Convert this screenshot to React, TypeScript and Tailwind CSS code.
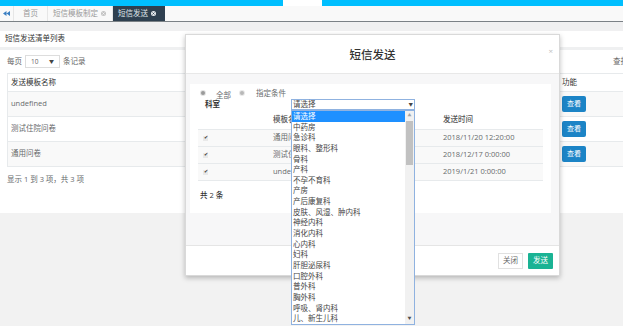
const depts = [
  "请选择",
  "中药房",
  "急诊科",
  "眼科、整形科",
  "骨科",
  "产科",
  "不孕不育科",
  "产房",
  "产后康复科",
  "皮肤、风湿、肿内科",
  "神经内科",
  "消化内科",
  "心内科",
  "妇科",
  "肝胆泌尿科",
  "口腔外科",
  "普外科",
  "胸外科",
  "呼吸、肾内科",
  "儿、新生儿科",
  "外科",
];

const pageRows = ["undefined", "测试住院问卷", "通用问卷"];

const sendRows = [
  { name: "通用问卷", time: "2018/11/20 12:20:00" },
  { name: "测试住院问卷", time: "2018/12/17 0:00:00" },
  { name: "undefined", time: "2019/1/21 0:00:00" },
];

const CloseCircle = ({ color, cross }: { color: string; cross: string }) => (
  <svg width="5" height="5" viewBox="0 0 10 10" className="ml-[3px]">
    <circle cx="5" cy="5" r="5" fill={color} />
    <path d="M3 3 L7 7 M7 3 L3 7" stroke={cross} strokeWidth="1.6" />
  </svg>
);

const TabBar = () => {
  return (
    <div className="flex h-[16px] items-stretch border-b border-[#7b8186] bg-[#f9f9f9] text-[7.5px] text-[#999]">
      <div className="flex w-[14px] items-center justify-center border-r border-[#e6e6e6]">
        <svg width="7" height="5" viewBox="0 0 14 10">
          <path d="M0 5 L7 0 L7 10 Z M7 5 L14 0 L14 10 Z" fill="#3a7fc2" />
        </svg>
      </div>
      <div className="flex w-[34px] items-center justify-center border-r border-[#e6e6e6]">首页</div>
      <div className="flex items-center border-r border-[#e6e6e6] pr-[6px] pl-[5px]">
        短信模板制定
        <CloseCircle color="#c4c4c4" cross="#f9f9f9" />
      </div>
      <div className="flex w-[52px] items-center bg-[#2f4050] pl-[5px] text-[#dfe4e8]">
        短信发送
        <CloseCircle color="#e6e9ec" cross="#2f4050" />
      </div>
    </div>
  );
};

const PageList = () => {
  return (
    <div className="h-[182px] bg-white">
      <div className="flex h-[19px] items-center border-b-[3px] border-[#eff0f1] px-[5px] text-[7.5px] text-[#333]">
        短信发送清单列表
      </div>
      <div className="w-[716px] pl-[7px]">
        <div className="mt-[5px] flex h-[13px] items-center text-[7.5px] text-[#666]">
          <span>每页</span>
          <div className="mx-[3px] flex h-[13px] w-[35px] items-center justify-between border border-[#ddd] px-[5px] text-[6.5px]">
            <span>10</span>
            <span className="text-[5px] text-[#444]">▼</span>
          </div>
          <span>条记录</span>
          <span className="ml-auto w-[103px]">查找：</span>
        </div>
        <div className="mt-[5px] border-l border-t border-[#e7eaec] text-[7.5px] text-[#676a6c]">
          <div className="grid h-[18px] grid-cols-[550px_1fr] items-center border-b border-[#e7eaec] text-[#333]">
            <span className="pl-[3px]">发送模板名称</span>
            <span className="pl-[4px]">功能</span>
          </div>
          {pageRows.map((r, i) => (
            <div
              key={r}
              className={
                "grid h-[25px] grid-cols-[550px_1fr] items-center border-b border-[#e7eaec] " +
                (i % 2 === 0 ? "bg-[#f9f9f9]" : "bg-white")
              }
            >
              <span className="pl-[3px]">{r}</span>
              <div className="pl-[4px]">
                <div className="flex h-[16px] w-[24px] items-center justify-center rounded-[2px] bg-[#1c84c6] text-[7px] text-white">
                  查看
                </div>
              </div>
            </div>
          ))}
        </div>
        <div className="mt-[7px] text-[7.5px] leading-[10px] text-[#676a6c]">显示 1 到 3 项，共 3 项</div>
      </div>
    </div>
  );
};

const DeptList = () => {
  return (
    <div className="absolute top-[110px] left-[291px] flex h-[215px] w-[124px] overflow-hidden border border-[#8fb2e0] bg-white text-[7.5px] text-[#444]">
      <div className="flex-1 overflow-hidden">
        {depts.map((d, i) => (
          <div
            key={d}
            className={
              "h-[10.65px] pl-[1px] leading-[10.65px] whitespace-nowrap " +
              (i === 0 ? "bg-[#1e90ff] text-white" : "")
            }
          >
            {d}
          </div>
        ))}
      </div>
      <div className="flex w-[9px] flex-col items-center bg-[#f1f1f1]">
        <div className="flex h-[10px] items-center text-[4px] text-[#a3a3a3]">▲</div>
        <div className="h-[44px] w-[7px] bg-[#c1c1c1]" />
        <div className="flex-1" />
        <div className="flex h-[10px] items-center text-[4px] text-[#505050]">▼</div>
      </div>
    </div>
  );
};

const SendModal = () => {
  return (
    <div className="absolute top-[34px] left-[185px] flex h-[242px] w-[375px] flex-col border border-[#d9d9d9] bg-white shadow-[0_2px_5px_rgba(0,0,0,0.25)]">
      <div className="relative flex h-[39px] items-center justify-center border-b border-[#e8e8e8] pt-[2px] text-[11.5px] font-medium text-[#333]">
        短信发送
        <span className="absolute top-[10px] right-[6px] text-[8px] text-[#c0c0c0]">×</span>
      </div>
      <div className="flex-1 bg-[#f7f7f8] pt-[10px] pr-[8px] pl-[4px]">
        <div className="h-[129px] bg-white px-[8px] text-[7.5px] text-[#676a6c]">
          <div className="flex h-[15px] items-center pt-[2px]">
            <span className="ml-[3px] h-[4px] w-[4px] rounded-full bg-[#9a9a9a] ring-1 ring-[#e3e3e3]" />
            <span className="mt-[6px] ml-[11px]">全部</span>
            <span className="ml-[9px] h-[4px] w-[4px] rounded-full bg-[#b8b8b8] ring-1 ring-[#e8e8e8]" />
            <span className="mt-[3px] ml-[12px]">指定条件</span>
          </div>
          <div className="flex h-[11px] items-center">
            <span className="w-[93px] pl-[7px] font-bold text-[#333]">科室</span>
            <div className="flex h-[11px] w-[124px] items-center justify-between border border-[#8fb2e0] px-[1px] text-[#444]">
              <span>请选择</span>
              <span className="text-[4.5px]">▼</span>
            </div>
          </div>
          <div className="grid h-[20px] grid-cols-[75px_170px_1fr] items-center border-b border-[#e7eaec] font-medium text-[#555]">
            <span />
            <span>模板名称</span>
            <span>发送时间</span>
          </div>
          {sendRows.map((r) => (
            <div
              key={r.time}
              className="grid h-[17px] grid-cols-[75px_170px_1fr] items-center border-b border-[#e7eaec] bg-[#f9f9f9]"
            >
              <span className="pl-[5px]">
                <span className="flex h-[5px] w-[5px] items-center justify-center bg-[#e9e9e9] text-[5px] text-[#333]">
                  ✔
                </span>
              </span>
              <span>{r.name}</span>
              <span>{r.time}</span>
            </div>
          ))}
          <div className="mt-[9px] pl-[2px] font-medium text-[#333]">共 2 条</div>
        </div>
      </div>
      <div className="flex h-[30px] items-center justify-end gap-[5px] border-t border-[#e5e5e5] pr-[6px] text-[7.5px]">
        <div className="flex h-[16px] w-[25px] items-center justify-center border border-[#e1e1e1] bg-white text-[#666]">
          关闭
        </div>
        <div className="flex h-[16px] w-[25px] items-center justify-center rounded-[1px] bg-[#1ab394] text-white">
          发送
        </div>
      </div>
    </div>
  );
};

export default function App() {
  return (
    <div
      className="relative h-[326px] w-[623px] overflow-hidden bg-[#f2f2f2]"
      style={{ fontFamily: '"Open Sans", "Noto Sans CJK SC", sans-serif' }}
    >
      <div className="flex h-[6px]">
        <div className="w-[283px] bg-[#00bfff]" />
        <div className="w-[39px] bg-white" />
        <div className="flex-1 bg-[#00bfff]" />
      </div>
      <TabBar />
      <div className="h-[9px] bg-[#f0f0f1]" />
      <PageList />
      <SendModal />
      <DeptList />
    </div>
  );
}
